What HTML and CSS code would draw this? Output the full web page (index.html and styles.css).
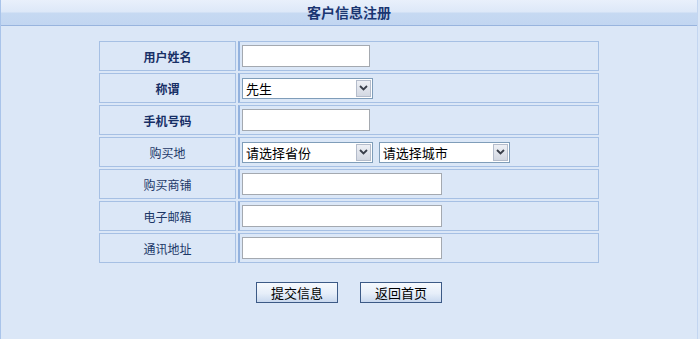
FILE: index.html
```html
<!DOCTYPE html>
<html lang="zh-CN">
<head>
  <meta charset="UTF-8">
  <title>客户信息注册</title>
  <link rel="stylesheet" href="styles.css">
</head>
<body>

<div class="page">
  <div class="title-bar">客户信息注册</div>

  <form id="regForm">
    <table class="reg-table">
      <tr>
        <td class="label strong">用户姓名</td>
        <td class="field"><input type="text" class="txt short"></td>
      </tr>
      <tr>
        <td class="label strong">称谓</td>
        <td class="field">
          <span class="sel">
            <select><option>先生</option><option>女士</option></select>
            <span class="arrow"><svg width="9" height="6" viewBox="0 0 9 6"><path d="M1 1 L4.5 4.5 L8 1" fill="none" stroke="#3a3f4a" stroke-width="1.8"/></svg></span>
          </span>
        </td>
      </tr>
      <tr>
        <td class="label strong">手机号码</td>
        <td class="field"><input type="text" class="txt short"></td>
      </tr>
      <tr>
        <td class="label">购买地</td>
        <td class="field">
          <span class="sel">
            <select><option>请选择省份</option></select>
            <span class="arrow"><svg width="9" height="6" viewBox="0 0 9 6"><path d="M1 1 L4.5 4.5 L8 1" fill="none" stroke="#3a3f4a" stroke-width="1.8"/></svg></span>
          </span>
          <span class="sel city">
            <select><option>请选择城市</option></select>
            <span class="arrow"><svg width="9" height="6" viewBox="0 0 9 6"><path d="M1 1 L4.5 4.5 L8 1" fill="none" stroke="#3a3f4a" stroke-width="1.8"/></svg></span>
          </span>
        </td>
      </tr>
      <tr>
        <td class="label">购买商铺</td>
        <td class="field"><input type="text" class="txt long"></td>
      </tr>
      <tr>
        <td class="label">电子邮箱</td>
        <td class="field"><input type="text" class="txt long"></td>
      </tr>
      <tr>
        <td class="label">通讯地址</td>
        <td class="field"><input type="text" class="txt long"></td>
      </tr>
    </table>

    <div class="actions">
      <button type="submit" class="btn">提交信息</button>
      <button type="button" class="btn">返回首页</button>
    </div>
  </form>
</div>

</body>
</html>
```

FILE: styles.css
```css
body {
  margin: 0;
  background: #dbe7f7;
  font-family: "Noto Sans CJK SC", "DejaVu Sans", sans-serif;
  font-size: 12px;
}

.page {
  min-height: 100vh;
  width: 698px;
  box-sizing: border-box;
  border-left: 1px solid #a9c4ea;
  border-right: 1px solid #c3d6f1;
  background: #dbe7f7;
}

.title-bar {
  height: 25px;
  line-height: 25px;
  text-align: center;
  font-size: 14px;
  font-weight: bold;
  color: #1a3672;
  background: linear-gradient(to bottom, #e9f0fb 0, #dde8f8 48%, #c6d9f2 52%, #c2d6f1 100%);
  border-bottom: 1px solid #98b4de;
}

.reg-table {
  margin: 13px auto 0;
  border-collapse: separate;
  border-spacing: 2px;
}

.reg-table td {
  height: 28px;
  padding: 0 2px;
  border: 1px solid #a6c0e4;
  vertical-align: middle;
}

.label {
  width: 131px;
  text-align: center;
  color: #1b3767;
}

.label.strong {
  font-weight: bold;
  color: #172f66;
}

.field {
  width: 354px;
  border-left: 2px solid #93b2de !important;
}

.txt {
  height: 22px;
  box-sizing: border-box;
  border: 1px solid #a4a9b0;
  background: #fff;
  padding: 0 3px;
  display: block;
}

.short {
  width: 128px;
}

.long {
  width: 200px;
}

.sel {
  display: inline-flex;
  align-items: center;
  width: 131px;
  height: 21px;
  box-sizing: border-box;
  border: 1px solid #7f9db9;
  background: #fff;
  vertical-align: middle;
}

.sel.city {
  margin-left: 3px;
}

.sel select {
  -webkit-appearance: none;
  appearance: none;
  border: none;
  outline: none;
  background: transparent;
  flex: 1;
  min-width: 0;
  height: 19px;
  padding: 0 0 0 3px;
  font-family: "Noto Sans CJK SC", "DejaVu Sans", sans-serif;
  font-size: 13px;
  color: #000;
}

.arrow {
  width: 15px;
  height: 17px;
  margin-right: 1px;
  box-sizing: border-box;
  border: 1px solid #b4bccb;
  background: linear-gradient(to bottom, #eef0f5, #d3d8e2);
  display: flex;
  align-items: center;
  justify-content: center;
}

.actions {
  display: flex;
  justify-content: center;
  gap: 22px;
  margin-top: 17px;
}

.btn {
  width: 82px;
  height: 21px;
  padding: 0;
  border: 1px solid #3c5a86;
  background: linear-gradient(to bottom, #f6f9fd 0, #e6eef9 55%, #c9d9ef 100%);
  font-family: "Noto Sans CJK SC", "DejaVu Sans", sans-serif;
  font-size: 13px;
  color: #000;
  cursor: pointer;
}
```
